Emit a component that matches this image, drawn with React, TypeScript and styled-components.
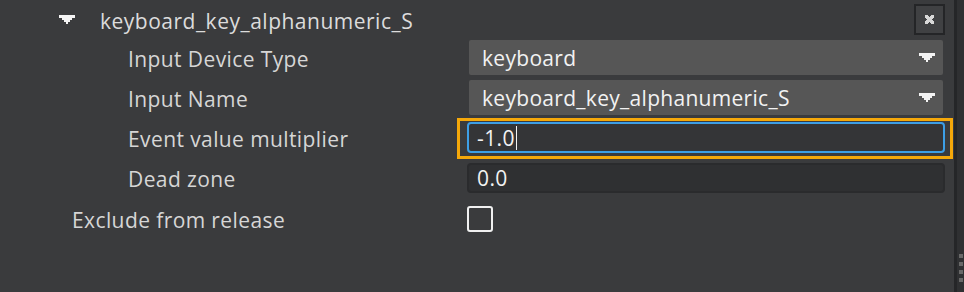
import React from "react";
import styled, { createGlobalStyle } from "styled-components";

const GlobalStyle = createGlobalStyle`
  html, body {
    margin: 0;
    padding: 0;
    background: #3a3b3d;
  }
  body {
    font-family: "Open Sans", "Noto Sans", sans-serif;
  }
`;

const Page = styled.div`
  display: flex;
  width: 964px;
  height: 292px;
  background: #3a3b3d;
  overflow: hidden;
`;

const Panel = styled.div`
  flex: 1;
  display: flex;
  flex-direction: column;
  padding-top: 4px;
  padding-right: 9px;
`;

const SideBar = styled.div`
  width: 7px;
  border-left: 3px solid #252628;
  background: #2f3032;
  display: flex;
  flex-direction: column;
  justify-content: flex-end;
  align-items: flex-end;
  gap: 4px;
  padding-bottom: 10px;
`;

const Grip = styled.div`
  width: 4px;
  height: 4px;
  margin-right: 1px;
  background: #686868;
`;

const HeaderRow = styled.div`
  display: flex;
  align-items: center;
  height: 31px;
  padding-left: 59px;
`;

const Caret = styled.svg`
  flex: none;
  display: block;
`;

const HeaderTitle = styled.div`
  flex: 1;
  margin-left: 25px;
  margin-top: 3px;
  font-size: 21px;
  letter-spacing: 0.5px;
  color: #dcdcdc;
`;

const CloseButton = styled.div`
  width: 27px;
  height: 27px;
  border: 2px solid #242527;
  background: #404143;
  display: flex;
  align-items: center;
  justify-content: center;
`;

const Row = styled.div<{ $height: number }>`
  display: grid;
  grid-template-columns: 467px 1fr;
  grid-template-rows: 100%;
  align-items: center;
  height: ${(p) => p.$height}px;
  margin-top: 5px;
`;

const Label = styled.div<{ $indent: number }>`
  padding-left: ${(p) => p.$indent}px;
  font-size: 21px;
  letter-spacing: 0.4px;
  color: #d6d6d6;
  margin-top: 2px;
`;

const Select = styled.div`
  display: flex;
  align-items: center;
  height: 35px;
  margin-left: 2px;
  margin-right: 2px;
  padding: 0 8px 0 13px;
  background: #565656;
  border-radius: 2px;
  color: #f2f2f2;
  font-size: 21px;
  letter-spacing: 0.3px;
`;

const SelectText = styled.span`
  flex: 1;
`;

const Highlight = styled.div`
  border: 3px solid #f5a80a;
  padding: 1px 5px 3px 7px;
  margin: -2px -8px -4px -10px;
`;

const TextInput = styled.div<{ $focused?: boolean }>`
  box-sizing: border-box;
  display: flex;
  align-items: center;
  height: ${(p) => (p.$focused ? 31 : 30)}px;
  padding-left: 8px;
  background: ${(p) => (p.$focused ? "#343537" : "#2f3032")};
  border: 2px solid ${(p) => (p.$focused ? "#3d9fe6" : "#2a2b2d")};
  border-radius: 4px;
  color: #f2f2f2;
  font-size: 21px;
  letter-spacing: 0.4px;
`;

const Cursor = styled.span`
  display: inline-block;
  width: 1px;
  height: 24px;
  background: #f2f2f2;
  margin-left: 1px;
`;

const Checkbox = styled.div`
  width: 22px;
  height: 22px;
  border: 2px solid #f0f0f0;
  border-radius: 3px;
`;

const DownArrow = () => (
  <Caret width="16" height="9" viewBox="0 0 16 9" shapeRendering="crispEdges">
    <path d="M0 0 H16 V3 H13 V5 H11 V7 H9 V9 H7 V7 H5 V5 H3 V3 H0 Z" fill="#f4f4f4" />
  </Caret>
);

const App = () => {
  return (
    <Page>
      <GlobalStyle />
      <Panel>
        <HeaderRow>
          <Caret width="16" height="9" viewBox="0 0 16 9" shapeRendering="crispEdges">
            <path d="M0 0 H16 V3 H13 V5 H11 V7 H9 V9 H7 V7 H5 V5 H3 V3 H0 Z" fill="#f4f4f4" />
          </Caret>
          <HeaderTitle>keyboard_key_alphanumeric_S</HeaderTitle>
          <CloseButton>
            <svg width="9" height="9" viewBox="0 0 9 9" shapeRendering="crispEdges">
              <path
                d="M0 0 H3 V1 H4 V2 H5 V1 H6 V0 H9 V3 H8 V4 H7 V5 H8 V6 H9 V9 H6 V8 H5 V7 H4 V8 H3 V9 H0 V6 H1 V5 H2 V4 H1 V3 H0 Z"
                fill="#d8d8d8"
              />
            </svg>
          </CloseButton>
        </HeaderRow>
        <Row $height={35}>
          <Label $indent={128}>Input Device Type</Label>
          <Select>
            <SelectText>keyboard</SelectText>
            <DownArrow />
          </Select>
        </Row>
        <Row $height={35}>
          <Label $indent={128}>Input Name</Label>
          <Select>
            <SelectText>keyboard_key_alphanumeric_S</SelectText>
            <DownArrow />
          </Select>
        </Row>
        <Row $height={35}>
          <Label $indent={128}>Event value multiplier</Label>
          <Highlight>
            <TextInput $focused>
              -1.0
              <Cursor />
            </TextInput>
          </Highlight>
        </Row>
        <Row $height={35}>
          <Label $indent={128}>Dead zone</Label>
          <TextInput>0.0</TextInput>
        </Row>
        <Row $height={38}>
          <Label $indent={72}>Exclude from release</Label>
          <Checkbox />
        </Row>
      </Panel>
      <SideBar>
        <Grip />
        <Grip />
        <Grip />
        <Grip />
      </SideBar>
    </Page>
  );
};

export default App;
